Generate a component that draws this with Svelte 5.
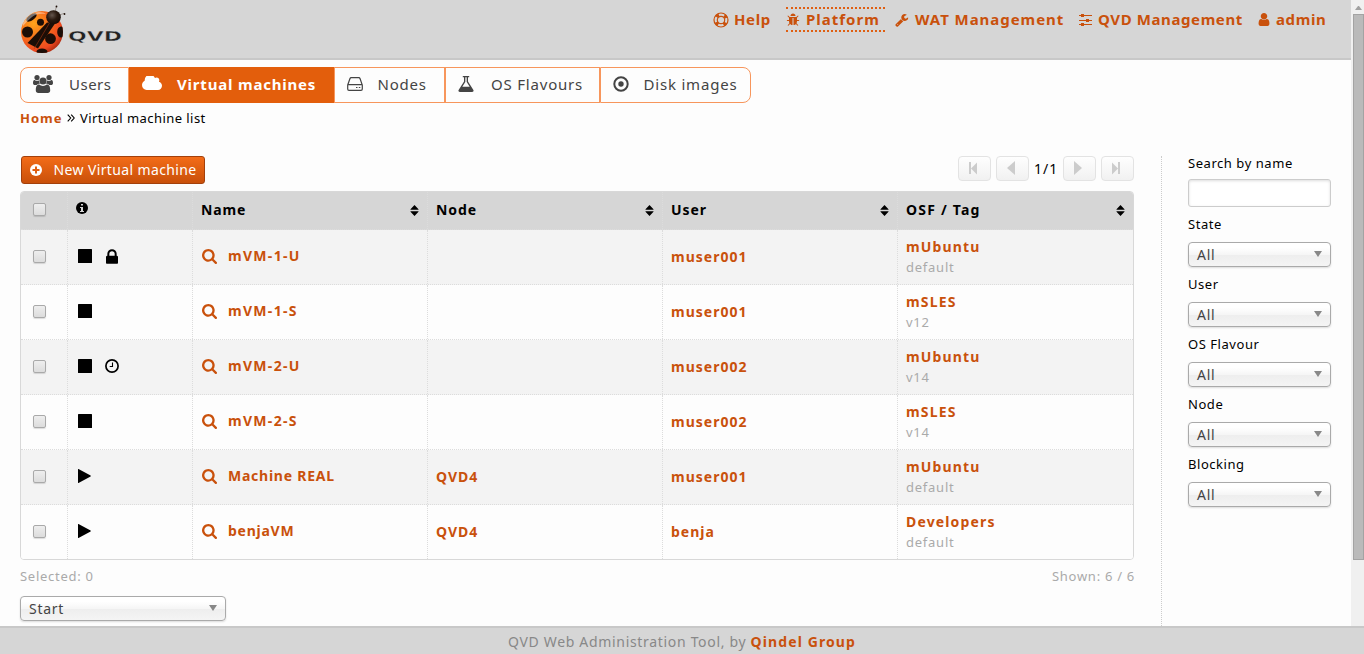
<script>
  const nav = [
    { icon: 'help', label: 'Help', width: 73 },
    { icon: 'bug', label: 'Platform', width: 99, active: true },
    { icon: 'wrench', label: 'WAT Management', width: 174 },
    { icon: 'sliders', label: 'QVD Management', width: 169 },
    { icon: 'user', label: 'admin', width: 73 }
  ];
  const tabs = [
    { icon: 'group', label: 'Users', width: 109, text: 48 },
    { icon: 'cloud', label: 'Virtual machines', width: 205, text: 48, active: true },
    { icon: 'disk', label: 'Nodes', width: 111, text: 43 },
    { icon: 'flask', label: 'OS Flavours', width: 155, text: 45 },
    { icon: 'target', label: 'Disk images', width: 151, text: 43 }
  ];
  const rows = [
    { state: 'stop', extra: 'lock', name: 'mVM-1-U', node: '', user: 'muser001', osf: 'mUbuntu', tag: 'default' },
    { state: 'stop', name: 'mVM-1-S', node: '', user: 'muser001', osf: 'mSLES', tag: 'v12' },
    { state: 'stop', extra: 'clock', name: 'mVM-2-U', node: '', user: 'muser002', osf: 'mUbuntu', tag: 'v14' },
    { state: 'stop', name: 'mVM-2-S', node: '', user: 'muser002', osf: 'mSLES', tag: 'v14' },
    { state: 'play', name: 'Machine REAL', node: 'QVD4', user: 'muser001', osf: 'mUbuntu', tag: 'default' },
    { state: 'play', name: 'benjaVM', node: 'QVD4', user: 'benja', osf: 'Developers', tag: 'default' }
  ];
  const columns = ['Name', 'Node', 'User', 'OSF / Tag'];
  const filters = ['State', 'User', 'OS Flavour', 'Node', 'Blocking'];
</script>

{#snippet icon(name, w, h = w)}
  {#if name === 'help'}
    <svg width={w} height={h} viewBox="0 0 16 16" fill="none" stroke="currentColor"><circle cx="8" cy="8" r="7" stroke-width="1.2"/><circle cx="8" cy="8" r="3.7" stroke-width="1.2"/><circle cx="8" cy="8" r="5.4" stroke-width="3.4" stroke-dasharray="3 5.48" stroke-dashoffset="-2.74"/></svg>
  {:else if name === 'bug'}
    <svg width={w} height={h} viewBox="64 0 1664 1792"><path fill="currentColor" d="M1696 960q0 26-19 45t-45 19h-224q0 171-67 290l208 209q19 19 19 45t-19 45q-18 19-45 19t-45-19l-198-197q-5 5-15 13t-42 28.5-65 36.5-82 29-97 13v-896h-128v896q-51 0-101.500-13.500t-87-33-66-39-43.500-32.500l-15-14-183 207q-20 21-48 21-24 0-43-16-19-18-20.500-44.500t15.500-46.500l202-227q-58-114-58-274h-224q-26 0-45-19t-19-45 19-45 45-19h224v-294l-173-173q-19-19-19-45t19-45 45-19 45 19l173 173h844l173-173q19-19 45-19t45 19 19 45-19 45l-173 173v294h224q26 0 45 19t19 45zm-480-576h-640q0-133 93.500-226.500t226.500-93.500 226.500 93.500 93.500 226.500z"/></svg>
  {:else if name === 'wrench'}
    <svg width={w} height={h} viewBox="64 0 1728 1792"><path fill="currentColor" d="M448 1472q0-26-19-45t-45-19-45 19-19 45 19 45 45 19 45-19 19-45zm644-420l-682 682q-37 37-90 37-52 0-91-37l-106-108q-38-36-38-90 0-53 38-91l681-681q39 98 114.500 173.500t173.500 114.500zm634-435q0 39-23 106-47 134-164.500 217.500t-258.500 83.500q-185 0-316.500-131.500t-131.500-316.500 131.500-316.500 316.500-131.500q58 0 121.500 16.500t107.500 46.500q16 11 16 28t-16 28l-293 169v224l193 107q5-3 79-48.500t135.500-81 70.500-35.500q15 0 23.500 10t8.500 25z"/></svg>
  {:else if name === 'sliders'}
    <svg width={w} height={h} viewBox="0 0 14 14" fill="currentColor"><path d="M0 2h2V1h3v1h8v1H5v1H2V3H0zM0 7h7V6h3v1h3v1h-3v1H7V8H0zM0 11h2v-1h3v1h8v1H5v1H2v-1H0z"/></svg>
  {:else if name === 'user'}
    <svg width={w} height={h} viewBox="256 128 1280 1536"><path fill="currentColor" d="M1536 1399q0 109-62.500 187t-150.500 78h-854q-88 0-150.500-78t-62.500-187q0-85 8.500-160.500t31.500-152 58.500-131 94-89 134.500-34.500q131 128 313 128t313-128q76 0 134.500 34.500t94 89 58.500 131 31.500 152 8.500 160.500zm-256-887q0 159-112.500 271.500t-271.500 112.500-271.500-112.500-112.500-271.500 112.500-271.500 271.500-112.500 271.500 112.500 112.500 271.500z"/></svg>
  {:else if name === 'group'}
    <svg width={w} height={h} viewBox="0 0 20 18" fill="currentColor"><circle cx="4" cy="2.600" r="2.600"/><circle cx="16" cy="2.600" r="2.600"/><path d="M0 8c0-2 .6-3 1.600-2.900 1.300 1 3.200 1.100 4.400.4.100 1.400.3 2.200 1 3.200-1.500 0-2.600.4-3.300 1.300H2C.8 10 0 9.400 0 8zM20 8c0-2-.6-3-1.600-2.900-1.300 1-3.200 1.100-4.400.4-.1 1.400-.3 2.200-1 3.200 1.500 0 2.600.4 3.300 1.300H18c1.200 0 2-.6 2-2z"/><circle cx="10" cy="6" r="3.600"/><path d="M2.800 15.500c0-3.700.8-5.900 3.300-5.900 2.300 1.900 5.500 1.900 7.800 0 2.500 0 3.300 2.200 3.300 5.900 0 1.500-1 2.500-2.500 2.500H5.300c-1.500 0-2.500-1-2.500-2.500z"/></svg>
  {:else if name === 'cloud'}
    <svg width={w} height={h} viewBox="64 256 1920 1280" preserveAspectRatio="none"><path fill="currentColor" d="M1984 1152q0 159-112.500 271.500t-271.500 112.500h-1088q-185 0-316.500-131.500t-131.500-316.500q0-132 71-241.500t187-163.500q-2-28-2-43 0-212 150-362t362-150q158 0 286.500 88t187.500 230q70-62 166-62 106 0 181 75t75 181q0 75-41 138 129 30 213 134.500t84 239.500z"/></svg>
  {:else if name === 'disk'}
    <svg width={w} height={h} viewBox="0 0 16 14" fill="none" stroke="currentColor" stroke-width="1.200"><path d="M.7 8 3 1.500Q3.300.7 4.200.7h7.600q.9 0 1.200.8L15.300 8v4q0 1.300-1.300 1.300H2Q.7 13.300.7 12zM1 7.700h14M9 10.500h1.500M11.800 10.500h1.500"/></svg>
  {:else if name === 'flask'}
    <svg width={w} height={h} viewBox="128 128 1536 1536"><path fill="currentColor" d="M1591 1448q56 89 21.500 152.500t-140.500 63.500h-1152q-106 0-140.500-63.500t21.500-152.500l503-793v-399h-64q-26 0-45-19t-19-45 19-45 45-19h512q26 0 45 19t19 45-19 45-45 19h-64v399zm-779-725l-272 429h712l-272-429-20-31v-436h-128v436z"/></svg>
  {:else if name === 'target'}
    <svg width={w} height={h} viewBox="0 0 16 16"><circle cx="8" cy="8" r="6.700" fill="none" stroke="currentColor" stroke-width="2"/><circle cx="8" cy="8" r="2.700" fill="currentColor"/></svg>
  {:else if name === 'search'}
    <svg width={w} height={h} viewBox="64 128 1664 1664"><path fill="currentColor" d="M1216 832q0-185-131.500-316.500t-316.500-131.500-316.500 131.500-131.500 316.500 131.500 316.500 316.500 131.500 316.500-131.500 131.500-316.500zm512 832q0 52-38 90t-90 38q-54 0-90-38l-343-342q-179 124-399 124-143 0-273.500-55.500t-225-150-150-225-55.500-273.500 55.500-273.500 150-225 225-150 273.500-55.500 273.500 55.500 225 150 150 225 55.500 273.500q0 220-124 399l343 343q37 37 37 90z"/></svg>
  {:else if name === 'lock'}
    <svg width={w} height={h} viewBox="320 128 1152 1408"><path fill="currentColor" d="M640 768h512v-192q0-106-75-181t-181-75-181 75-75 181v192zm832 96v576q0 40-28 68t-68 28h-960q-40 0-68-28t-28-68v-576q0-40 28-68t68-28h32v-192q0-184 132-316t316-132 316 132 132 316v192h32q40 0 68 28t28 68z"/></svg>
  {:else if name === 'clock'}
    <svg width={w} height={h} viewBox="0 0 14 14" fill="none" stroke="currentColor"><circle cx="7" cy="7" r="6.100" stroke-width="1.700"/><path d="M7.500 3.500v4H4.700" stroke-width="1.100"/></svg>
  {:else if name === 'stop'}
    <svg width={w} height={h} viewBox="0 0 14 14"><rect width="14" height="14" rx=".5" fill="currentColor"/></svg>
  {:else if name === 'play'}
    <svg width={w} height={h} viewBox="0 0 14 14"><path d="M0 .3Q0-.2.500.1L12.600 6.600Q13 7 12.600 7.400L.5 13.900Q0 14.200 0 13.700z" fill="currentColor"/></svg>
  {:else if name === 'info'}
    <svg width={w} height={h} viewBox="0 0 12 12"><circle cx="6" cy="6" r="6" fill="currentColor"/><path d="M5 2h2v1.500H5zM4 5h3v4h1v1H4V9h1V6H4z" fill="#d6d6d6"/></svg>
  {:else if name === 'plus'}
    <svg width={w} height={h} viewBox="0 0 12 12"><circle cx="6" cy="6" r="6" fill="currentColor"/><path d="M5 2.500h2V5h2.500v2H7v2.500H5V7H2.500V5H5z" fill="#df5f12"/></svg>
  {:else if name === 'sort'}
    <svg width={w} height={h} viewBox="0 0 8 11" fill="currentColor"><path d="M4 0 8 4.200v.6H0v-.6zM4 11 8 6.800v-.6H0v.6z"/></svg>
  {:else if name === 'angles'}
    <svg width={w} height={h} viewBox="0 0 8 8" fill="none" stroke="currentColor" stroke-width="1.100"><path d="m.7.700 3 3.300-3 3.300M4.200.700l3 3.300-3 3.300"/></svg>
  {:else if name === 'first'}
    <svg width={w} height={h} viewBox="0 0 9 13" fill="currentColor"><path d="M0 0h2v12H0zM8 .5v12L2 6.500z"/></svg>
  {:else if name === 'last'}
    <svg width={w} height={h} viewBox="0 0 9 13" fill="currentColor"><path d="M6 0h2v12H6zM0 .5v12l6-6z"/></svg>
  {:else if name === 'prev'}
    <svg width={w} height={h} viewBox="0 0 8 14" fill="currentColor"><path d="M8 0v14L0 7z"/></svg>
  {:else if name === 'next'}
    <svg width={w} height={h} viewBox="0 0 8 14" fill="currentColor"><path d="M0 0v14l8-7z"/></svg>
  {/if}
{/snippet}

<div class="app">
  <div class="view">
    <div class="page">
      <header>
        <svg class="logo" width="104" height="52" viewBox="0 0 104 52">
          <defs>
            <radialGradient id="shell" cx=".3" cy=".3" r=".8">
              <stop offset="0" stop-color="#ffa41c"/><stop offset=".4" stop-color="#f7731b"/><stop offset=".8" stop-color="#ee4a20"/><stop offset="1" stop-color="#a8280f"/>
            </radialGradient>
            <radialGradient id="head" cx=".4" cy=".35" r=".7"><stop offset="0" stop-color="#65554c"/><stop offset=".5" stop-color="#2b1a10"/><stop offset="1" stop-color="#140904"/></radialGradient>
            <clipPath id="body"><circle cx="22" cy="28" r="21"/></clipPath>
          </defs>
          <circle cx="22" cy="28" r="21" fill="url(#shell)"/>
          <g clip-path="url(#body)" fill="#1c0e07">
            <path d="M27 18.500 35 19.500 18 44.500 7.500 39z"/>
            <path d="M29.500 19 14 45" stroke="#a33512" stroke-width=".6"/>
            <ellipse cx="11.500" cy="13.500" rx="6" ry="2.800" transform="rotate(-35 11.500 13.500)"/>
            <circle cx="7.500" cy="28" r="5.500"/><circle cx="20.500" cy="18.300" r="3.500"/>
            <circle cx="30.500" cy="34.700" r="5.400"/><ellipse cx="41" cy="28" rx="3.800" ry="5.500"/><ellipse cx="22" cy="47.500" rx="5.500" ry="3"/>
            <path d="M3 19Q9 8 19 8q5 0 7 2-9-1-14 3T3 22z" fill="#fff" opacity=".4"/>
          </g>
          <path d="m35 8 1.500-6M39 11l5-1.500" stroke="#6b5a50" stroke-width=".5"/>
          <ellipse cx="33.500" cy="13.300" rx="7.300" ry="7" fill="url(#head)"/>
          <circle cx="36.500" cy="2.500" r=".9" fill="#1c0e07"/><circle cx="44.500" cy="10" r=".9" fill="#1c0e07"/>
          <text x="48" y="36.500" textLength="54" lengthAdjust="spacingAndGlyphs" class="wordmark">QVD</text>
        </svg>
        <nav>
          {#each nav as item}
            <a class={item.icon} class:active={item.active} style:width="{item.width}px">
              <i>{@render icon(item.icon, item.icon === 'help' ? 16 : item.icon === 'user' ? 12 : 14, item.icon === 'help' ? 16 : item.icon === 'user' ? 13 : 14)}</i><b>{item.label}</b>
            </a>
          {/each}
        </nav>
      </header>

      <div class="tabs">
        {#each tabs as tab}
          <div class="tab {tab.icon}" class:active={tab.active} style:width="{tab.width}px">
            <i style:width="{tab.text - 12}px">{@render icon(tab.icon, tab.icon === 'group' || tab.icon === 'cloud' ? 20 : 16, tab.icon === 'group' ? 18 : tab.icon === 'cloud' || tab.icon === 'disk' ? 14 : 16)}</i><span>{tab.label}</span>
          </div>
        {/each}
      </div>
      <div class="crumbs"><b>Home</b>{@render icon('angles', 8)}<span>Virtual machine list</span></div>

      <div class="columns">
        <main>
          <div class="tools">
            <button class="new">{@render icon('plus', 12)}<span>New Virtual machine</span></button>
            <div class="pager">
              <button>{@render icon('first', 9, 13)}</button><button class="step">{@render icon('prev', 8, 14)}</button>
              <span>1/1</span>
              <button class="step">{@render icon('next', 8, 14)}</button><button>{@render icon('last', 9, 13)}</button>
            </div>
          </div>

          <div class="table">
            <div class="row head">
              <div class="check"><span class="box"></span></div>
              <div class="info">{@render icon('info', 12)}</div>
              {#each columns as c}<div class="title"><b>{c}</b>{@render icon('sort', 9, 11)}</div>{/each}
            </div>
            {#each rows as r}
              <div class="row">
                <div class="check"><span class="box"></span></div>
                <div class="state"><i>{@render icon(r.state, 14)}</i>{#if r.extra}<i class={r.extra}>{@render icon(r.extra, r.extra === 'lock' ? 12 : 14, r.extra === 'lock' ? 15 : 14)}</i>{/if}</div>
                <div class="name">{@render icon('search', 15)}<b class:vm={r.name.startsWith('mVM')}>{r.name}</b></div>
                <div class="cell"><b>{r.node}</b></div>
                <div class="cell"><b>{r.user}</b></div>
                <div class="osf"><b>{r.osf}</b><span>{r.tag}</span></div>
              </div>
            {/each}
          </div>
          <div class="counts"><span>Selected: 0</span><span>Shown: 6 / 6</span></div>
          <div class="select action"><span>Start</span><i class="arrow"></i></div>
        </main>

        <aside>
          <div class="label">Search by name</div>
          <input type="text" aria-label="Search by name" />
          {#each filters as f}
            <div class="label">{f}</div>
            <div class="select"><span>All</span><i class="arrow"></i></div>
          {/each}
        </aside>
      </div>
    </div>
    <div class="scroll"><div class="up"></div><div class="thumb"></div></div>
  </div>
  <footer>QVD Web Administration Tool, by <b>Qindel Group</b></footer>
</div>

<style>
  :global(body) { overflow: hidden; }
  * { box-sizing: border-box; }
  svg { display: block; flex: none; }
  i { font-style: normal; flex: none; }
  .app { width: 1364px; height: 654px; display: flex; flex-direction: column; background: #fdfdfd; color: #000; font: 14px/18px "Noto Sans", "Open Sans", sans-serif; letter-spacing: 1px; white-space: nowrap; }
  .view { height: 626px; display: flex; overflow: hidden; }
  .page { width: 1351px; }
  b { font-weight: 700; }
  header { height: 60px; background: #d6d6d6; border-bottom: 2px solid #c8c8c8; display: flex; justify-content: space-between; padding-left: 20px; }
  .logo { margin-top: 4px; }
  .wordmark { font: bold 14px "DejaVu Sans", sans-serif; letter-spacing: 0; fill: #222; stroke: #d6d6d6; stroke-width: .4px; }
  nav { display: flex; padding: 7px 20px 0 0; color: #c9510c; font-size: 15px; }
  nav a { display: flex; align-items: center; height: 25px; border: dotted transparent; border-width: 2px 0; }
  nav a.active { border-color: #df5f12; margin-right: 10px; }
  nav a b { padding-bottom: 2px; }
  nav a i { width: 20px; }
  nav .help i { width: 21px; }
  nav .help { letter-spacing: .6px; }
  nav .wrench { letter-spacing: .95px; }
  nav .wrench, nav .sliders { margin-right: 10px; }
  nav .wrench i { margin-left: -.5px; width: 20.500px; }
  nav .sliders i { width: 19px; }
  nav .sliders { letter-spacing: .6px; }
  nav .user i { width: 18px; }
  nav .user { letter-spacing: .6px; }
  .tabs { display: flex; width: 731px; height: 36px; margin: 7px 0 0 20px; font-size: 15px; letter-spacing: .8px; color: #444; }
  .tab { display: flex; align-items: center; border: 1px solid #f7965c; padding-left: 12px; }
  .tab i, .tab span { padding-bottom: 2px; }
  .tab.cloud i { width: 35px; margin-right: -1px; padding-bottom: 4px; }
  .tab.target i, .tab.disk i { margin-left: -.5px; }
  .tab:first-child { border-radius: 8px 0 0 8px; letter-spacing: .5px; }
  .tab:last-child { border-radius: 0 8px 8px 0; }
  .tab.active { background: #e35e0c; border-color: #e35e0c; color: #fff; font-weight: 700; }
  .crumbs { display: flex; align-items: center; height: 18px; margin: 6px 0 0 20px; font-size: 13px; }
  .crumbs b { color: #c9510c; width: 47px; }
  .crumbs span { margin-left: 5px; letter-spacing: .45px; }
  .columns { display: flex; margin-top: 29px; height: 470px; }
  main { width: 1162px; padding-left: 20px; border-right: 1px dotted #ccc; }
  .tools { display: flex; justify-content: space-between; width: 1114px; height: 35px; }
  button { font: inherit; letter-spacing: inherit; padding: 0; display: flex; align-items: center; }
  .new { width: 184px; height: 28px; margin-left: 1px; padding-left: 8px; gap: 11.500px; letter-spacing: .37px; color: #fff; border: 1px solid #a3400b; border-radius: 3px; background: linear-gradient(#f36c18, #c9500a); }
  .pager { display: flex; gap: 5px; }
  .pager button { width: 33px; height: 25px; justify-content: center; padding-right: 2px; color: #ccc; border: 1px solid #e3e3e3; border-radius: 4px; background: linear-gradient(#fefefe, #f1f1f1); }
  .pager .step { padding: 0 3px 2px 0; }
  .pager span { width: 24px; padding-top: 4px; }
  .table { width: 1114px; height: 369px; border: 1px solid #d8d8d8; border-radius: 4px; overflow: hidden; }
  .row { display: grid; grid-template-columns: 47px 125px 235px 235px 235px 1fr; height: 55px; background: #fdfdfd; border-bottom: 1px dotted #dcdcdc; }
  .row:nth-child(even) { background: #f3f3f3; }
  .row:last-child { border-bottom-color: transparent; }
  .row.head { height: 38px; background: #d6d6d6; }
  .row > div { display: flex; align-items: center; padding-left: 8px; border-right: 1px dotted #dcdcdc; }
  .row > div:last-child { border-right: 0; }
  .row .check { padding: 0 0 1px 12px; }
  .row.head .check { padding-bottom: 2px; }
  .box { width: 13px; height: 13px; border: 1px solid #a9a9a9; border-radius: 2px; background: linear-gradient(#eee, #dcdcdc); box-shadow: 0 1px 1px #0002; }
  .row .info { padding: 0 0 5px 8px; }
  .title { justify-content: space-between; }
  .row .title { padding: 0 8px 2px 8px; letter-spacing: .9px; }
  .row .title:last-child { letter-spacing: 1.200px; }
  .title svg { margin-top: 2px; }
  .row .state { padding: 0 0 2px 10px; }
  .state i { width: 28px; }
  .state .clock { margin-left: -1px; }
  .row .name { padding: 0 0 2px 9px; }
  .name b { margin-left: 11px; letter-spacing: .75px; }
  .name .vm { letter-spacing: 1.300px; }
  .name, .cell, .osf b { color: #c9510c; }
  .row .osf { flex-direction: column; align-items: flex-start; justify-content: flex-start; padding-top: 7px; line-height: 20px; }
  .osf b { letter-spacing: 1.150px; }
  .osf span { font-size: 13px; letter-spacing: .75px; }
  .osf span, .counts { color: #aaa; }
  .counts { display: flex; justify-content: space-between; width: 1115px; padding-top: 7px; font-size: 13px; letter-spacing: .72px; }
  .select { display: flex; align-items: center; justify-content: space-between; width: 143px; height: 25px; padding: 0 8px 0 8px; border: 1px solid #aaa; border-radius: 4px; background: linear-gradient(#fff 20%, #f6f6f6 50%, #eee 52%, #f4f4f4); box-shadow: 0 1px 2px #0002; color: #444; letter-spacing: .7px; }
  .arrow { border: solid transparent; border-top-color: #888; border-width: 6px 4px 0; margin-bottom: 1px; }
  .action { width: 206px; margin-top: 11px; }
  aside { padding-left: 26px; font-size: 13px; letter-spacing: .55px; }
  .label { height: 18px; margin-bottom: 8px; }
  .label:first-child { margin: -2px 0 9px; }
  aside .select { margin-bottom: 9px; font-size: 14px; }
  aside .select:not(:last-child) { margin-bottom: 8px; }
  aside .label:not(:first-child) { margin-bottom: 9px; }
  input { display: block; width: 143px; height: 28px; margin: -2px 0 8px; border: 1px solid #ccc; border-radius: 3px; background: #fff; box-shadow: inset 0 1px 3px #0002; }
  .scroll { width: 13px; height: 626px; background: #f0f0f0; padding-left: 2px; }
  .up { width: 7px; height: 10px; margin: 0 0 4px 2px; border: solid transparent; border-width: 6px 3.500px 4px; border-bottom-color: #a0a0a0; }
  .thumb { height: 546px; border: 1px solid #a3a3a3; background: #bababa; }
  footer { height: 28px; border-top: 2px solid #c8c8c8; background: #d6d6d6; color: #888; text-align: center; padding-top: 5px; letter-spacing: .68px; }
  footer b { color: #c9510c; letter-spacing: 1.100px; }
</style>
